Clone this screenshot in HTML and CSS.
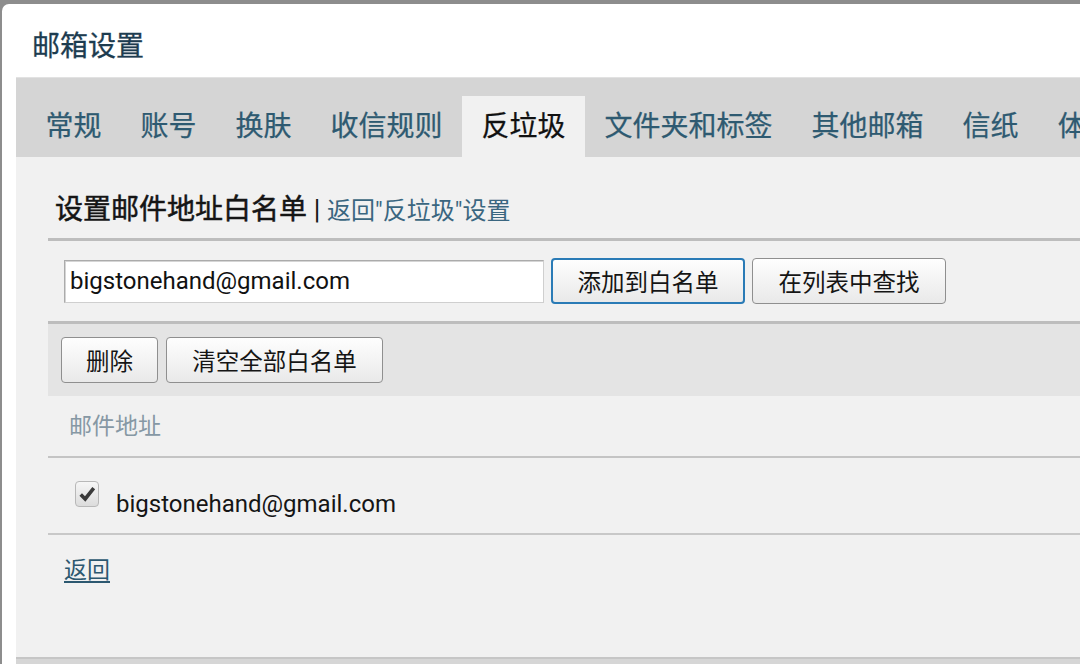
FILE: index.html
```html
<!DOCTYPE html>
<html lang="zh-CN">
<head>
<meta charset="utf-8">
<title>邮箱设置</title>
<link rel="stylesheet" href="styles.css">
</head>
<body>
<div class="dialog">
  <div class="title">邮箱设置</div>
  <div class="tabs">
    <span class="tab">常规</span>
    <span class="tab">账号</span>
    <span class="tab">换肤</span>
    <span class="tab">收信规则</span>
    <span class="tab active">反垃圾</span>
    <span class="tab">文件夹和标签</span>
    <span class="tab">其他邮箱</span>
    <span class="tab">信纸</span>
    <span class="tab">体验室</span>
  </div>
  <div class="panel">
    <div class="heading"><span class="heading-main">设置邮件地址白名单</span><span class="sep"> | </span><a class="back-link">返回"反垃圾"设置</a></div>
    <div class="add-row">
      <div class="input">bigstonehand@gmail.com</div>
      <button class="btn focus">添加到白名单</button>
      <button class="btn">在列表中查找</button>
    </div>
    <div class="toolbar">
      <button class="btn small">删除</button>
      <button class="btn wide">清空全部白名单</button>
    </div>
    <div class="list-head">邮件地址</div>
    <div class="list-row">
      <span class="check"><svg class="tick" viewBox="0 0 20 20" width="18" height="18"><polyline points="3,10.5 8,15.5 17.5,3.5" fill="none" stroke="#3a3a3a" stroke-width="4" stroke-linejoin="miter" stroke-linecap="butt"/></svg></span>
      <span class="email">bigstonehand@gmail.com</span>
    </div>
    <div class="footer"><a class="back">返回</a></div>
  </div>
  <div class="bottom"></div>
</div>
</body>
</html>
```

FILE: styles.css
```css
html, body {
  margin: 0;
  padding: 0;
}
body {
  background: #8d8d8d;
  width: 1080px;
  height: 664px;
  overflow: hidden;
  font-family: Roboto, "Noto Sans CJK SC", sans-serif;
}
.dialog {
  margin: 4px 0 0 2px;
  background: #ffffff;
  border-top-left-radius: 7px;
  height: 660px;
  padding-left: 14px;
  overflow: hidden;
}
.title {
  height: 73px;
  box-sizing: border-box;
  padding: 24px 0 0 16px;
  font-size: 28px;
  line-height: 38px;
  color: #1d3c50;
  -webkit-text-stroke: 0.3px #1d3c50;
}
.tabs {
  height: 80px;
  background: #d5d5d5;
  border-top: 1px solid #e2e2e2;
  box-sizing: border-box;
  padding-left: 10px;
  display: flex;
  align-items: flex-end;
  white-space: nowrap;
  overflow: hidden;
}
.tab {
  flex: none;
  height: 61px;
  line-height: 61px;
  padding: 0 19.5px;
  font-size: 28px;
  color: #2e5a71;
  -webkit-text-stroke: 0.25px #2e5a71;
}
.tab.active {
  background: #f1f1f1;
  color: #111;
  -webkit-text-stroke: 0.25px #111;
}
.panel {
  background: #f1f1f1;
  height: 500px;
  padding-left: 32px;
}
.heading {
  padding: 33px 0 0 7px;
  height: 48px;
  line-height: 40px;
  border-bottom: 3px solid #bdbdbd;
  white-space: nowrap;
}
.heading-main {
  font-size: 28px;
  color: #151515;
  -webkit-text-stroke: 0.5px #151515;
}
.sep {
  font-size: 27px;
  color: #151515;
}
.back-link {
  font-size: 24px;
  color: #3a6680;
}
.add-row {
  height: 80px;
  border-bottom: 3px solid #bdbdbd;
  display: flex;
  align-items: center;
  gap: 7px;
  padding-left: 16px;
}
.input {
  width: 480px;
  height: 43px;
  box-sizing: border-box;
  background: #fff;
  border: 1px solid #ababab;
  border-bottom-color: #cfcfcf;
  border-right-color: #cfcfcf;
  box-shadow: inset 1px 1px 0 #d5d5d5;
  font-size: 24px;
  line-height: 40px;
  padding-left: 5px;
  color: #111;
}
.btn {
  height: 46px;
  box-sizing: border-box;
  border: 1.5px solid #8f8f8f;
  border-radius: 4px;
  background: linear-gradient(#fefefe, #e9e9e9);
  font-family: Roboto, "Noto Sans CJK SC", sans-serif;
  font-size: 23.5px;
  color: #151515;
  padding: 0;
  width: 194px;
}
.btn.focus {
  border: 2px solid #2a7bb6;
}
.toolbar {
  height: 72px;
  background: #e4e4e4;
  display: flex;
  align-items: center;
  gap: 8px;
  padding-left: 13px;
}
.btn.small {
  width: 97px;
}
.btn.wide {
  width: 217px;
}
.list-head {
  height: 60px;
  line-height: 62px;
  padding-left: 21px;
  font-size: 23px;
  color: #8698a4;
  border-bottom: 2px solid #c4c4c4;
}
.list-row {
  height: 75px;
  border-bottom: 2px solid #c8c8c8;
  display: flex;
  align-items: center;
  padding-left: 27px;
}
.check {
  flex: none;
  width: 24px;
  height: 26px;
  box-sizing: border-box;
  border: 1.5px solid #b8b8b8;
  border-radius: 4px;
  background: linear-gradient(#f6f6f6, #dcdcdc);
  display: flex;
  align-items: center;
  justify-content: center;
  margin-top: -3px;
}
.tick {
  flex: none;
  display: block;
}
.email {
  margin-left: 17px;
  font-size: 24px;
  color: #151515;
  margin-top: 16px;
}
.footer {
  padding: 18px 0 0 16px;
  line-height: 36px;
}
.back {
  font-size: 23px;
  color: #2c5870;
  text-decoration: underline;
  text-underline-offset: 3px;
}
.bottom {
  height: 7px;
  border-top: 2px solid #c6c6c6;
  background: #d6d6d6;
}
```
